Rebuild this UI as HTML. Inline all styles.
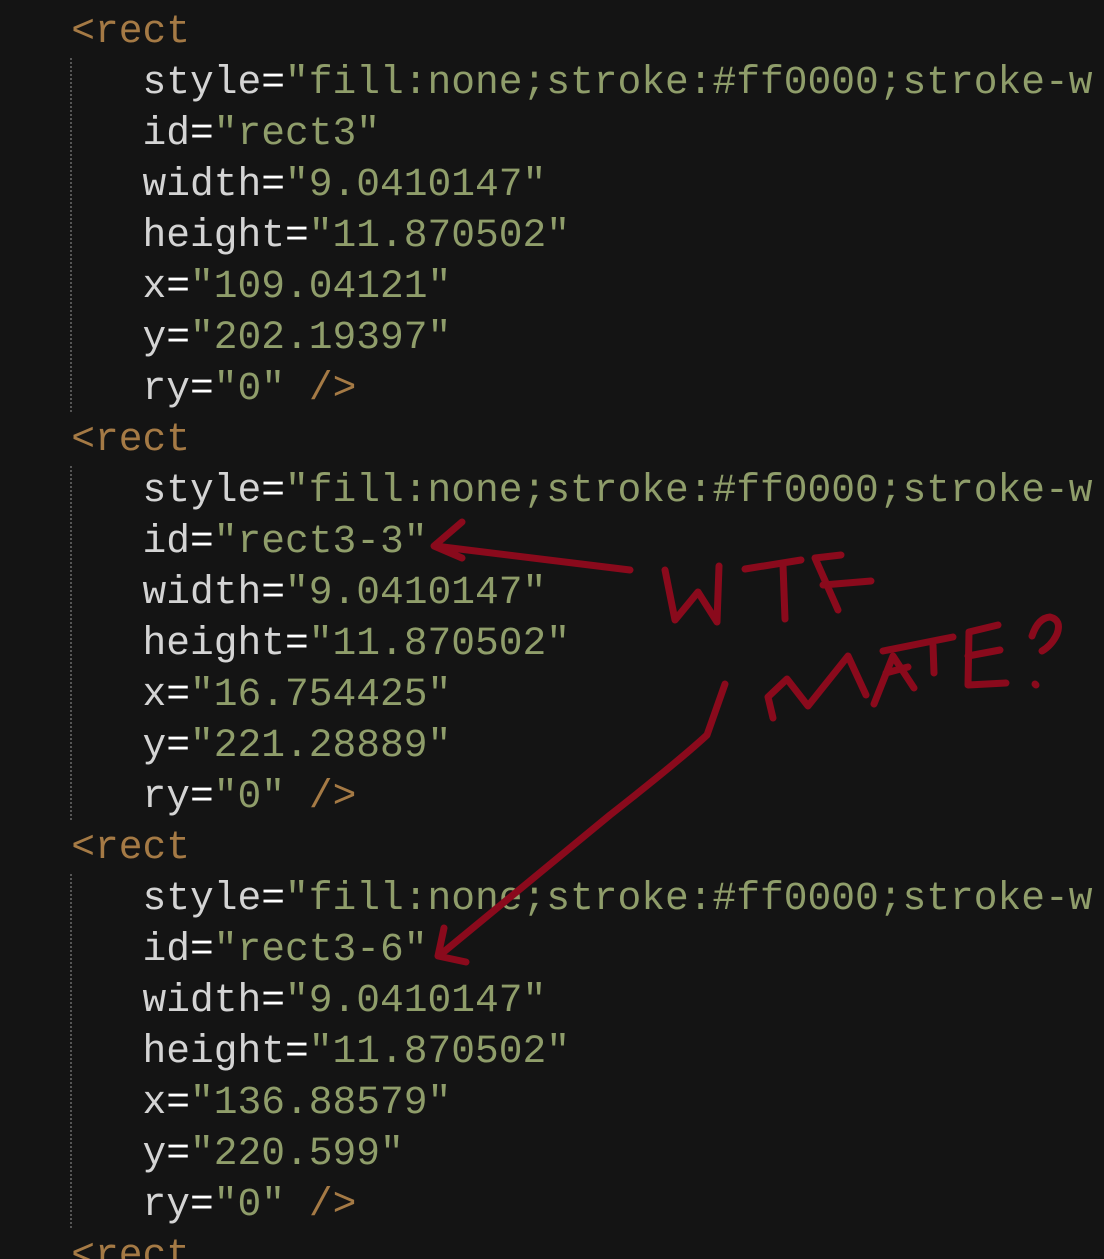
<!DOCTYPE html>
<html style="overflow:hidden"><head><style>
html,body{overflow:hidden}
body{margin:0;background:#141414;width:1104px;height:1259px;position:relative}
.l{position:absolute;left:0;height:51px;line-height:51px;font-family:"Liberation Mono","DejaVu Sans Mono",monospace;font-size:39.6px;white-space:pre;color:#d4d4d4;max-width:1104px;overflow:hidden}
.t{color:#a57a45}.s{color:#8f9d6a}.e{color:#fff}
.g{position:absolute;left:70px;width:0;border-left:2px dotted #555}
</style></head><body>
<div class="l" style="top:-45px"><span class="t">     )</span></div>
<div class="l" style="top:6px"><span class="t">   &lt;rect</span></div>
<div class="l" style="top:57px">      style<span class="e">=</span><span class="s">"fill:none;stroke:#ff0000;stroke-w</span></div>
<div class="l" style="top:108px">      id<span class="e">=</span><span class="s">"rect3"</span></div>
<div class="l" style="top:159px">      width<span class="e">=</span><span class="s">"9.0410147"</span></div>
<div class="l" style="top:210px">      height<span class="e">=</span><span class="s">"11.870502"</span></div>
<div class="l" style="top:261px">      x<span class="e">=</span><span class="s">"109.04121"</span></div>
<div class="l" style="top:312px">      y<span class="e">=</span><span class="s">"202.19397"</span></div>
<div class="l" style="top:363px">      ry<span class="e">=</span><span class="s">"0"</span> <span class="t">/&gt;</span></div>
<div class="l" style="top:414px"><span class="t">   &lt;rect</span></div>
<div class="l" style="top:465px">      style<span class="e">=</span><span class="s">"fill:none;stroke:#ff0000;stroke-w</span></div>
<div class="l" style="top:516px">      id<span class="e">=</span><span class="s">"rect3-3"</span></div>
<div class="l" style="top:567px">      width<span class="e">=</span><span class="s">"9.0410147"</span></div>
<div class="l" style="top:618px">      height<span class="e">=</span><span class="s">"11.870502"</span></div>
<div class="l" style="top:669px">      x<span class="e">=</span><span class="s">"16.754425"</span></div>
<div class="l" style="top:720px">      y<span class="e">=</span><span class="s">"221.28889"</span></div>
<div class="l" style="top:771px">      ry<span class="e">=</span><span class="s">"0"</span> <span class="t">/&gt;</span></div>
<div class="l" style="top:822px"><span class="t">   &lt;rect</span></div>
<div class="l" style="top:873px">      style<span class="e">=</span><span class="s">"fill:none;stroke:#ff0000;stroke-w</span></div>
<div class="l" style="top:924px">      id<span class="e">=</span><span class="s">"rect3-6"</span></div>
<div class="l" style="top:975px">      width<span class="e">=</span><span class="s">"9.0410147"</span></div>
<div class="l" style="top:1026px">      height<span class="e">=</span><span class="s">"11.870502"</span></div>
<div class="l" style="top:1077px">      x<span class="e">=</span><span class="s">"136.88579"</span></div>
<div class="l" style="top:1128px">      y<span class="e">=</span><span class="s">"220.599"</span></div>
<div class="l" style="top:1179px">      ry<span class="e">=</span><span class="s">"0"</span> <span class="t">/&gt;</span></div>
<div class="l" style="top:1230px"><span class="t">   &lt;rect</span></div>
<div class="g" style="top:58px;height:354px"></div>
<div class="g" style="top:466px;height:354px"></div>
<div class="g" style="top:874px;height:354px"></div>
<svg style="position:absolute;left:0;top:0" width="1104" height="1259" fill="none" stroke="#8a0a1c" stroke-width="7" stroke-linecap="round" stroke-linejoin="round">
<path d="M630 570 L435 546 M462 522 L434 546 L462 558"/>
<path d="M665 570 L675 620 L698 592 L717 622 L719 566"/>
<path d="M745 569 L801 560 M783 565 L785 619"/>
<path d="M815 558 L838 610 M815 558 L841 555 M823 585 L871 581"/>
<path d="M773 718 L768 697 L787 679 L808 706 L848 656 L866 695"/>
<path d="M874 704 L893 656 L914 688 M886 673 L908 667"/>
<path d="M883 651 L953 637 M933 645 L934 673"/>
<path d="M998 625 L969 632 L968 685 L1006 683 M968 656 L1000 650"/>
<path d="M1032 636 Q1038 618 1050 617 Q1062 620 1057 634 Q1052 645 1042 651"/>
<path d="M1035 684 L1036 685"/>
<path d="M725 684 L707 735 Q680 760 610 815 L440 955 M444 928 L438 956 L466 962"/>
</svg>
</body></html>
